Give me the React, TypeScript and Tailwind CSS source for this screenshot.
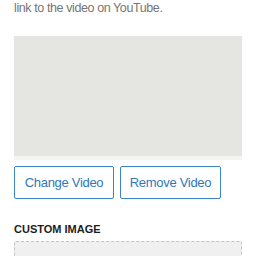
export default function App() {
  return (
    <div className="w-[256px] h-[256px] overflow-hidden bg-white font-['Liberation_Sans',Arial,sans-serif]">
      <div className="px-[14px] pt-[1px]">
        <p className="text-[12.5px] leading-[14px] tracking-[-0.4px] text-[#757575]">link to the video on YouTube.</p>

        <div className="mt-[21px] w-[228px] h-[124px] flex flex-col">
          <div className="flex-1 bg-[#e5e6e1]" />
          <div className="h-[4px] bg-[#f3f3f1]" />
        </div>

        <div className="mt-[6px] flex gap-[6px]">
          <button className="h-[33px] w-[100px] border border-[#3c86c6] rounded-[2px] text-[13px] tracking-[-0.3px] text-[#2f78bb]">
            Change Video
          </button>
          <button className="h-[33px] w-[101px] border border-[#3c86c6] rounded-[2px] text-[13px] tracking-[-0.3px] text-[#2f78bb]">
            Remove Video
          </button>
        </div>

        <h3 className="mt-[22px] text-[11px] leading-[16px] font-semibold uppercase text-[#1e1e1e]">Custom Image</h3>

        <div className="mt-[4px] h-[40px] border border-dashed border-[#c3c4c7] bg-[#f0f0f1] rounded-[2px]" />
      </div>
    </div>
  );
}
